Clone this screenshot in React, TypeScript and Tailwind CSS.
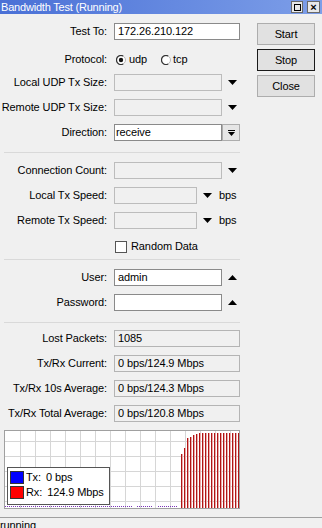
import { FC, ReactNode } from "react";

const DownTri: FC = () => (
    <svg width="9" height="5" viewBox="0 0 9 5" className="block">
        <polygon points="0,0 9,0 4.5,5" fill="#000" />
    </svg>
);

const UpTri: FC = () => (
    <svg width="9" height="5" viewBox="0 0 9 5" className="block">
        <polygon points="0,5 9,5 4.5,0" fill="#000" />
    </svg>
);

const Radio: FC<{ checked?: boolean }> = ({ checked }) => (
    <svg width="10" height="10" viewBox="0 0 10 10" className="block">
        <circle cx="5" cy="5" r="4.5" fill="#fff" stroke="#b8b8b8" />
        <path d="M7.2 1.1 A4.5 4.5 0 1 0 7.2 8.9" fill="none" stroke="#333" strokeWidth="1.2" />
        {checked && <circle cx="5" cy="5" r="2.2" fill="#111" />}
    </svg>
);

interface RowProps {
    label?: string;
    className?: string;
    children?: ReactNode;
}

const Row: FC<RowProps> = ({ label, className, children }) => (
    <div className={`flex h-[17px] items-center ${className ?? ""}`}>
        <div className="w-[107px] shrink-0 text-right whitespace-nowrap">{label}</div>
        <div className="ml-[7px] flex h-full items-center">{children}</div>
    </div>
);

const Sep: FC<{ className?: string }> = ({ className }) => (
    <div className={`ml-[4px] h-px w-[236px] bg-[#d9d9d9] ${className ?? ""}`} />
);

const Dim: FC<{ w: string }> = ({ w }) => (
    <div className={`h-[17px] ${w} border border-[#bcbcbc] bg-[#f0f0f0]`} />
);

const ReadOnly: FC<{ value: string }> = ({ value }) => (
    <div className="h-[17px] w-[126px] border border-[#b4b4b4] bg-[#f0f0f0] pl-[3px] leading-[15px]">{value}</div>
);

const Graph: FC = () => {
    const vx = Array.from({ length: 15 }, (_, k) => 15.5 + 15 * k);
    const hy = [10.5, 25.5, 40.5, 55.5, 70.5];
    const tops = [23, 17, 7, 6, 4, 3, 2, 2, 2, 2, 2, 2, 2, 2, 2, 2, 2, 2, 2, 2];
    const dots: [number, number][] = [
        [0, 127],
        [132, 147],
        [153, 172],
    ];
    return (
        <div className="relative ml-[4px] mt-[8px] h-[79px] w-[236px] border border-[#a0a0a0] bg-white">
            <svg width="234" height="77" viewBox="0 0 234 77" className="absolute left-0 top-0 block">
                {vx.map((x) => (
                    <line key={`v${x}`} x1={x} y1="0" x2={x} y2="77" stroke="#d6d6d6" strokeWidth="1" />
                ))}
                {hy.map((y) => (
                    <line key={`h${y}`} x1="0" y1={y} x2="234" y2={y} stroke="#d6d6d6" strokeWidth="1" />
                ))}
                {tops.map((t, i) => (
                    <g key={i}>
                        <rect x={176 + i * 3} y={t} width="1" height={77 - t} fill="#b01515" />
                        <rect x={177 + i * 3} y={t} width="1" height={77 - t} fill="#eaa8a8" />
                    </g>
                ))}
                {dots.map(([a, b]) => (
                    <line key={a} x1={a} y1="75.5" x2={b} y2="75.5" stroke="#7a36b8" strokeWidth="1" strokeDasharray="1 1" />
                ))}
            </svg>
            <div className="absolute left-[2px] top-[36px] h-[38px] w-[103px] border border-[#555] bg-white">
                <div className="mt-[3px] flex h-[13px] items-center">
                    <div className="ml-[2px] h-[13px] w-[14px] border border-[#333] bg-[#0000ff]" />
                    <span className="ml-[2px]">Tx:</span>
                    <span className="ml-[5px]">0 bps</span>
                </div>
                <div className="mt-[2px] flex h-[13px] items-center">
                    <div className="ml-[2px] h-[13px] w-[14px] border border-[#333] bg-[#ff0000]" />
                    <span className="ml-[2px]">Rx:</span>
                    <span className="ml-[5px]">124.9 Mbps</span>
                </div>
            </div>
        </div>
    );
};

const Btn: FC<{ label: string; active?: boolean; className?: string }> = ({ label, active, className }) => (
    <div
        className={`flex h-[22px] w-[58px] items-center justify-center border bg-[#e1e1e1] ${
            active ? "border-[#1a1a1a]" : "border-[#adadad]"
        } ${className ?? ""}`}
    >
        {label}
    </div>
);

const App: FC = () => {
    return (
        <div className="h-[528px] w-[322px] overflow-hidden bg-[#f0f0f0] font-['Liberation_Sans',Arial,sans-serif] text-[11px] leading-[13px] tracking-[-0.1px] text-black">
            <div className="flex h-[14px] items-center bg-gradient-to-r from-[#4a70d6] to-[#7d9ee8]">
                <span className="ml-[1px] text-white tracking-[-0.2px]">Bandwidth Test (Running)</span>
                <div className="ml-auto mr-[2px] flex gap-[4px]">
                    <div className="flex h-[12px] w-[12px] items-center justify-center border border-[#6a6a6a] bg-[#e8e8e8]">
                        <div className="h-[7px] w-[7px] border border-black" />
                    </div>
                    <div className="flex h-[12px] w-[13px] items-center justify-center border border-[#6a6a6a] bg-[#e8e8e8] text-[11px] font-bold leading-none">
                        ×
                    </div>
                </div>
            </div>

            <div className="flex">
                <div className="w-[244px]">
                    <Row label="Test To:" className="mt-[9px]">
                        <div className="h-[17px] w-[126px] border border-[#8a8a8a] bg-white pl-[3px] leading-[15px]">172.26.210.122</div>
                    </Row>
                    <Row label="Protocol:" className="mt-[11px]">
                        <div className="ml-[2px] flex items-center">
                            <Radio checked />
                            <span className="ml-[3px]">udp</span>
                            <div className="ml-[14px]">
                                <Radio />
                            </div>
                            <span className="ml-[2px]">tcp</span>
                        </div>
                    </Row>
                    <Row label="Local UDP Tx Size:" className="mt-[6px]">
                        <Dim w="w-[108px]" />
                        <div className="ml-[6px]"><DownTri /></div>
                    </Row>
                    <Row label="Remote UDP Tx Size:" className="mt-[8px]">
                        <Dim w="w-[108px]" />
                        <div className="ml-[6px]"><DownTri /></div>
                    </Row>
                    <Row label="Direction:" className="mt-[8px]">
                        <div className="h-[17px] w-[108px] border border-[#8a8a8a] bg-white pl-[1px] leading-[15px]">receive</div>
                        <div className="flex h-[17px] w-[18px] flex-col items-center justify-center border border-[#adadad] bg-[#e6e6e6]">
                            <div className="h-px w-[7px] bg-black" />
                            <svg width="7" height="4" viewBox="0 0 7 4" className="mt-[1px] block">
                                <polygon points="0,0 7,0 3.5,4" fill="#000" />
                            </svg>
                        </div>
                    </Row>

                    <Sep className="mt-[11px]" />

                    <Row label="Connection Count:" className="mt-[9px]">
                        <Dim w="w-[108px]" />
                        <div className="ml-[6px]"><DownTri /></div>
                    </Row>
                    <Row label="Local Tx Speed:" className="mt-[8px]">
                        <Dim w="w-[83px]" />
                        <div className="ml-[6px]"><DownTri /></div>
                        <span className="ml-[7px]">bps</span>
                    </Row>
                    <Row label="Remote Tx Speed:" className="mt-[8px]">
                        <Dim w="w-[83px]" />
                        <div className="ml-[6px]"><DownTri /></div>
                        <span className="ml-[7px]">bps</span>
                    </Row>
                    <Row className="mt-[9px]">
                        <div className="ml-[1px] h-[12px] w-[12px] border border-[#555] bg-white" />
                        <span className="ml-[4px]">Random Data</span>
                    </Row>

                    <Sep className="mt-[4px]" />

                    <Row label="User:" className="mt-[9px]">
                        <div className="h-[17px] w-[108px] border border-[#8a8a8a] bg-white pl-[3px] leading-[15px]">admin</div>
                        <div className="ml-[6px]"><UpTri /></div>
                    </Row>
                    <Row label="Password:" className="mt-[8px]">
                        <div className="h-[17px] w-[108px] border border-[#8a8a8a] bg-white" />
                        <div className="ml-[6px]"><UpTri /></div>
                    </Row>

                    <Sep className="mt-[11px]" />

                    <Row label="Lost Packets:" className="mt-[7px]">
                        <ReadOnly value="1085" />
                    </Row>
                    <Row label="Tx/Rx Current:" className="mt-[8px]">
                        <ReadOnly value="0 bps/124.9 Mbps" />
                    </Row>
                    <Row label="Tx/Rx 10s Average:" className="mt-[8px]">
                        <ReadOnly value="0 bps/124.3 Mbps" />
                    </Row>
                    <Row label="Tx/Rx Total Average:" className="mt-[8px]">
                        <ReadOnly value="0 bps/120.8 Mbps" />
                    </Row>

                    <Graph />
                </div>

                <div className="ml-[13px] mt-[9px] flex flex-col gap-[4px]">
                    <Btn label="Start" />
                    <Btn label="Stop" active />
                    <Btn label="Close" />
                </div>
            </div>

            <div className="mt-[8px] border-t border-[#a0a0a0] pt-[1px]">running</div>
        </div>
    );
};

export default App;
